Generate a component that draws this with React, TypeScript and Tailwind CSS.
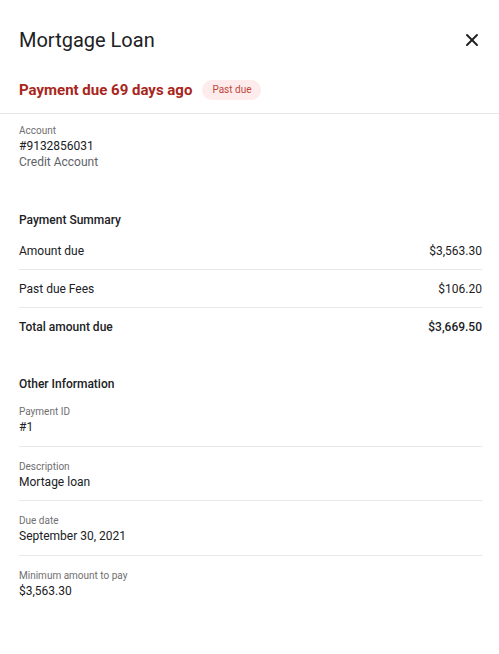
import { X } from "lucide-react"

interface InfoItem {
  label: string
  value: string
}

const summaryRows = [
  { label: "Amount due", value: "$3,563.30" },
  { label: "Past due Fees", value: "$106.20" },
]

const otherInfo: InfoItem[] = [
  { label: "Payment ID", value: "#1" },
  { label: "Description", value: "Mortage loan" },
  { label: "Due date", value: "September 30, 2021" },
  { label: "Minimum amount to pay", value: "$3,563.30" },
]

export default function App() {
  return (
    <div
      className="min-h-screen w-full bg-white text-[#202124]"
      style={{ fontFamily: "Roboto, 'Liberation Sans', sans-serif" }}
    >
      {/* Header */}
      <div className="flex items-center justify-between pl-[19px] pr-[17px] pt-[26px]">
        <h1 className="text-[20px] leading-[28px] font-normal">Mortgage Loan</h1>
        <button className="flex h-5 w-5 items-center justify-center text-[#202124]">
          <X className="h-[20px] w-[20px]" strokeWidth={2.4} />
        </button>
      </div>

      <div className="flex items-center gap-[10px] pl-[19px] pt-[26px] pb-[13px]">
        <p className="text-[15px] leading-[20px] font-bold text-[#a8261b]">Payment due 69 days ago</p>
        <span className="rounded-full bg-[#fdeceb] px-[10px] text-[10px] leading-[20px] text-[#c2453b]">
          Past due
        </span>
      </div>

      <div className="border-t border-[#e6e6e6]" />

      {/* Account */}
      <div className="pl-[19px] pr-[17px] pt-[10px]">
        <p className="text-[10px] leading-[14px] text-[#6f6f6f]">Account</p>
        <p className="text-[12px] leading-[16px]">#9132856031</p>
        <p className="text-[12px] leading-[17px] text-[#5f6368]">Credit Account</p>
      </div>

      {/* Payment Summary */}
      <div className="pl-[19px] pr-[17px] pt-[41px]">
        <h3 className="text-[12px] leading-[16px] font-medium">Payment Summary</h3>
        <div className="mt-1">
          {summaryRows.map((row) => (
            <div
              key={row.label}
              className="flex items-center justify-between border-b border-[#e8e8e8] py-[10.5px] text-[12px] leading-[16px]"
            >
              <span>{row.label}</span>
              <span>{row.value}</span>
            </div>
          ))}
          <div className="flex items-center justify-between py-[10.5px] text-[12px] leading-[16px] font-medium">
            <span>Total amount due</span>
            <span>$3,669.50</span>
          </div>
        </div>
      </div>

      {/* Other Information */}
      <div className="pl-[19px] pr-[17px] pt-[31px]">
        <h3 className="text-[12px] leading-[16px] font-medium">Other Information</h3>
        <div>
          {otherInfo.map((item, i) => (
            <div
              key={item.label}
              className={
                i < otherInfo.length - 1
                  ? "border-b border-[#e8e8e8] pt-[13px] pb-[10.5px]"
                  : "pt-[13px] pb-[10.5px]"
              }
            >
              <p className="text-[10px] leading-[14px] text-[#6f6f6f]">{item.label}</p>
              <p className="text-[12px] leading-[16px]">{item.value}</p>
            </div>
          ))}
        </div>
      </div>
    </div>
  )
}
